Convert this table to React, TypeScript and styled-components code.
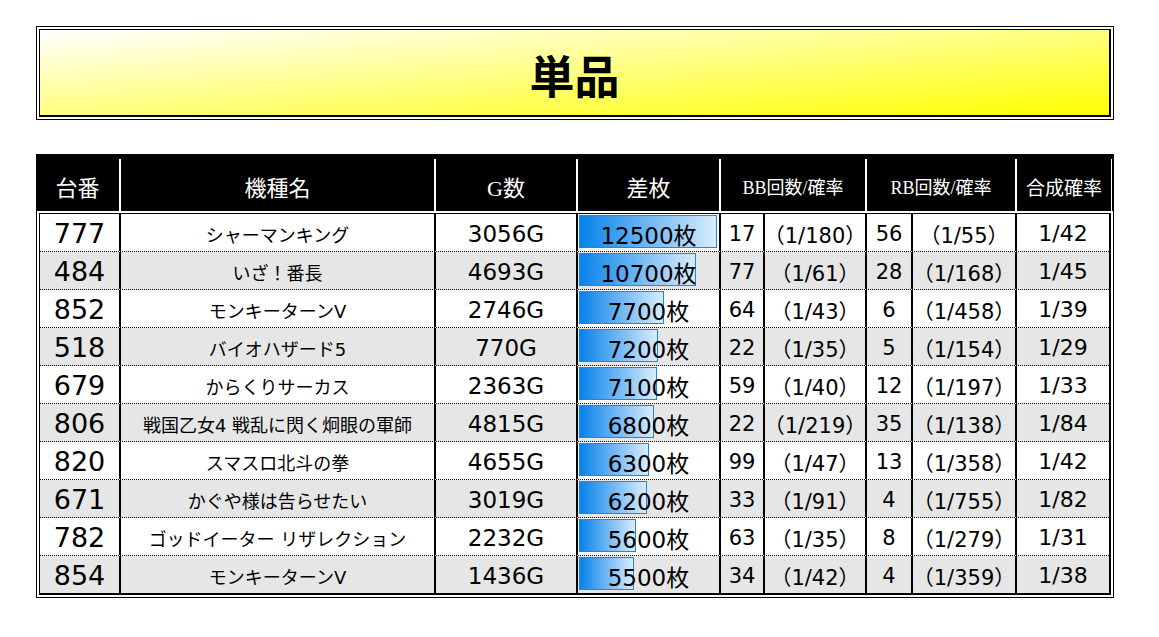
import styled, { createGlobalStyle } from "styled-components";

type Machine = {
  no: string;
  name: string;
  games: string;
  diff: number;
  bar: number;
  bb: string;
  bbRate: string;
  rb: string;
  rbRate: string;
  total: string;
};

const machines: Machine[] = [
  { no: "777", name: "シャーマンキング", games: "3056G", diff: 12500, bar: 138, bb: "17", bbRate: "（1/180）", rb: "56", rbRate: "（1/55）", total: "1/42" },
  { no: "484", name: "いざ！番長", games: "4693G", diff: 10700, bar: 117, bb: "77", bbRate: "（1/61）", rb: "28", rbRate: "（1/168）", total: "1/45" },
  { no: "852", name: "モンキーターンV", games: "2746G", diff: 7700, bar: 85, bb: "64", bbRate: "（1/43）", rb: "6", rbRate: "（1/458）", total: "1/39" },
  { no: "518", name: "バイオハザード5", games: "770G", diff: 7200, bar: 79, bb: "22", bbRate: "（1/35）", rb: "5", rbRate: "（1/154）", total: "1/29" },
  { no: "679", name: "からくりサーカス", games: "2363G", diff: 7100, bar: 78, bb: "59", bbRate: "（1/40）", rb: "12", rbRate: "（1/197）", total: "1/33" },
  { no: "806", name: "戦国乙女4 戦乱に閃く炯眼の軍師", games: "4815G", diff: 6800, bar: 75, bb: "22", bbRate: "（1/219）", rb: "35", rbRate: "（1/138）", total: "1/84" },
  { no: "820", name: "スマスロ北斗の拳", games: "4655G", diff: 6300, bar: 70, bb: "99", bbRate: "（1/47）", rb: "13", rbRate: "（1/358）", total: "1/42" },
  { no: "671", name: "かぐや様は告らせたい", games: "3019G", diff: 6200, bar: 68, bb: "33", bbRate: "（1/91）", rb: "4", rbRate: "（1/755）", total: "1/82" },
  { no: "782", name: "ゴッドイーター リザレクション", games: "2232G", diff: 5600, bar: 57, bb: "63", bbRate: "（1/35）", rb: "8", rbRate: "（1/279）", total: "1/31" },
  { no: "854", name: "モンキーターンV", games: "1436G", diff: 5500, bar: 55, bb: "34", bbRate: "（1/42）", rb: "4", rbRate: "（1/359）", total: "1/38" },
];

const GlobalStyle = createGlobalStyle`
  body {
    margin: 0;
    background: #fff;
    font-family: "DejaVu Sans", "Noto Sans CJK JP", sans-serif;
  }
`;

const Page = styled.div`
  width: 1078px;
  padding: 26px 0 0 36px;
`;

const TitleFrame = styled.div`
  border: 1px solid #000;
  padding: 2px;
`;

const TitleBox = styled.div`
  box-sizing: border-box;
  height: 88px;
  border-style: solid;
  border-color: #000;
  border-width: 1px 2px 2px 1px;
  background: linear-gradient(to bottom right, #ffffff, #ffff00);
  display: flex;
  align-items: center;
  justify-content: center;
  padding-top: 4px;
  font-family: "Noto Sans CJK JP", sans-serif;
  font-weight: 700;
  font-size: 45px;
  color: #000;
`;

const Table = styled.div`
  margin-top: 34px;
`;

const HeaderBar = styled.div`
  box-sizing: border-box;
  height: 57px;
  padding: 5px 2px 0 0;
  background: #000;
  display: grid;
  grid-template-columns: 83px 315px 142px 143px 146px 150px 97px;
`;

const HeadCell = styled.div<{ $first?: boolean; $last?: boolean; $size: number }>`
  display: flex;
  align-items: center;
  justify-content: center;
  border-left: ${({ $first }) => ($first ? "none" : "2px solid #fff")};
  border-right: ${({ $last }) => ($last ? "1px solid #fff" : "none")};
  color: #fff;
  font-family: "Liberation Serif", "Noto Sans CJK JP", serif;
  font-size: ${({ $size }) => $size}px;
  padding-top: 2px;
`;

const BodyFrame = styled.div`
  border: 1px solid #000;
  border-top: none;
  padding: 2px;
`;

const BodyInner = styled.div`
  border-style: solid;
  border-color: #000;
  border-width: 1px 2px 2px 1px;
`;

const Row = styled.div<{ $alt: boolean }>`
  box-sizing: border-box;
  height: 38px;
  display: grid;
  grid-template-columns: 79px 315px 142px 143px 44px 102px 46px 104px 94px;
  background: ${({ $alt }) => ($alt ? "#e6e6e6" : "#fff")};
  border-bottom: 1px dotted #000;

  &:last-child {
    height: 37px;
    border-bottom: none;
  }
`;

const Cell = styled.div<{ $first?: boolean; $size: number }>`
  position: relative;
  display: flex;
  align-items: center;
  justify-content: center;
  border-left: ${({ $first }) => ($first ? "none" : "2px solid #000")};
  font-size: ${({ $size }) => $size}px;
  color: #000;
  white-space: nowrap;
  padding-top: 2px;
`;

const DataBar = styled.div`
  position: absolute;
  left: 1px;
  top: 1px;
  height: 33px;
  box-sizing: border-box;
  border: 1px solid #108cf0;
  background: linear-gradient(to right, #0782ea, #d9ecfc);
`;

const BarText = styled.span`
  position: relative;
`;

export default function App() {
  return (
    <>
      <GlobalStyle />
      <Page>
        <TitleFrame>
          <TitleBox>単品</TitleBox>
        </TitleFrame>
        <Table>
          <HeaderBar>
            <HeadCell $first $size={22}>台番</HeadCell>
            <HeadCell $size={22}>機種名</HeadCell>
            <HeadCell $size={22}>G数</HeadCell>
            <HeadCell $size={22}>差枚</HeadCell>
            <HeadCell $size={18}>BB回数/確率</HeadCell>
            <HeadCell $size={18}>RB回数/確率</HeadCell>
            <HeadCell $last $size={19}>合成確率</HeadCell>
          </HeaderBar>
          <BodyFrame>
            <BodyInner>
              {machines.map((m, i) => (
                <Row key={m.no + i} $alt={i % 2 === 1}>
                  <Cell $first $size={27}>{m.no}</Cell>
                  <Cell $size={18}>{m.name}</Cell>
                  <Cell $size={23}>{m.games}</Cell>
                  <Cell $size={23}>
                    <DataBar style={{ width: m.bar }} />
                    <BarText>{m.diff}枚</BarText>
                  </Cell>
                  <Cell $size={21}>{m.bb}</Cell>
                  <Cell $size={21}>{m.bbRate}</Cell>
                  <Cell $size={21}>{m.rb}</Cell>
                  <Cell $size={21}>{m.rbRate}</Cell>
                  <Cell $size={22}>{m.total}</Cell>
                </Row>
              ))}
            </BodyInner>
          </BodyFrame>
        </Table>
      </Page>
    </>
  );
}
